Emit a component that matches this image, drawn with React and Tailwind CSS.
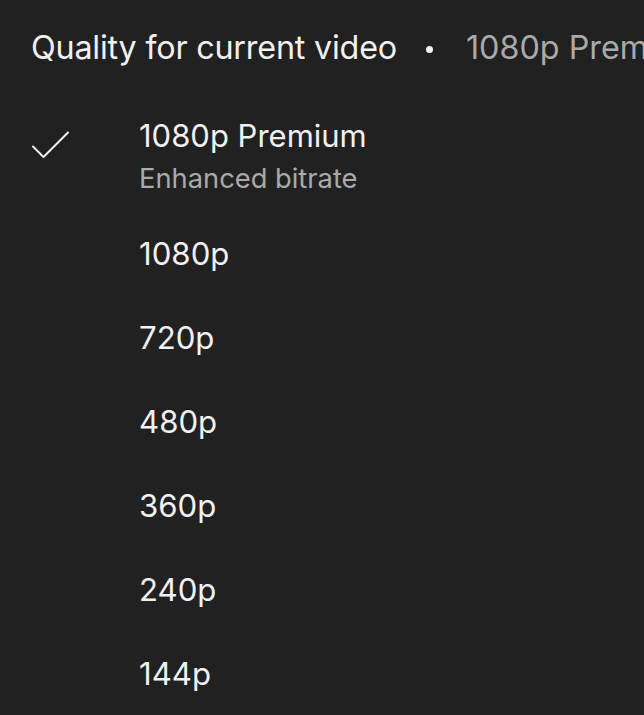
export default function App() {
  const items = ["1080p", "720p", "480p", "360p", "240p", "144p"];
  return (
    <div
      className="w-[644px] h-[715px] overflow-hidden bg-[#212121] text-[#f1f1f1]"
      style={{ fontFamily: 'Inter, "Noto Sans", sans-serif' }}
    >
      <div className="h-[94px] flex items-center pl-[31px] pt-[2px] whitespace-nowrap overflow-hidden">
        <span className="shrink-0 text-[32.3px] leading-none tracking-[-0.2px]">Quality for current video</span>
        <span className="shrink-0 ml-[29px] mt-[3px] w-[7px] h-[7px] rounded-full bg-[#f1f1f1]"></span>
        <span className="shrink-0 ml-[33px] text-[32.3px] leading-none text-[#aaaaaa]">1080p Premium</span>
      </div>
      <div className="relative h-[118px] pl-[139px] pt-[23px]">
        <svg
          className="absolute left-[30px] top-[36px]"
          width="42"
          height="30"
          viewBox="0 0 42 30"
          fill="none"
        >
          <path d="M3 16.5 L13.5 27 L38 2.5" stroke="#f1f1f1" strokeWidth="2" strokeLinecap="round" strokeLinejoin="round" />
        </svg>
        <div className="text-[31px] leading-[38px]">1080p Premium</div>
        <div className="mt-[7px] text-[27.3px] leading-[34px] text-[#aaaaaa]">Enhanced bitrate</div>
      </div>
      {items.map((q) => (
        <div key={q} className="h-[84px] flex items-center pl-[139px] text-[31.2px]">
          {q}
        </div>
      ))}
    </div>
  );
}
